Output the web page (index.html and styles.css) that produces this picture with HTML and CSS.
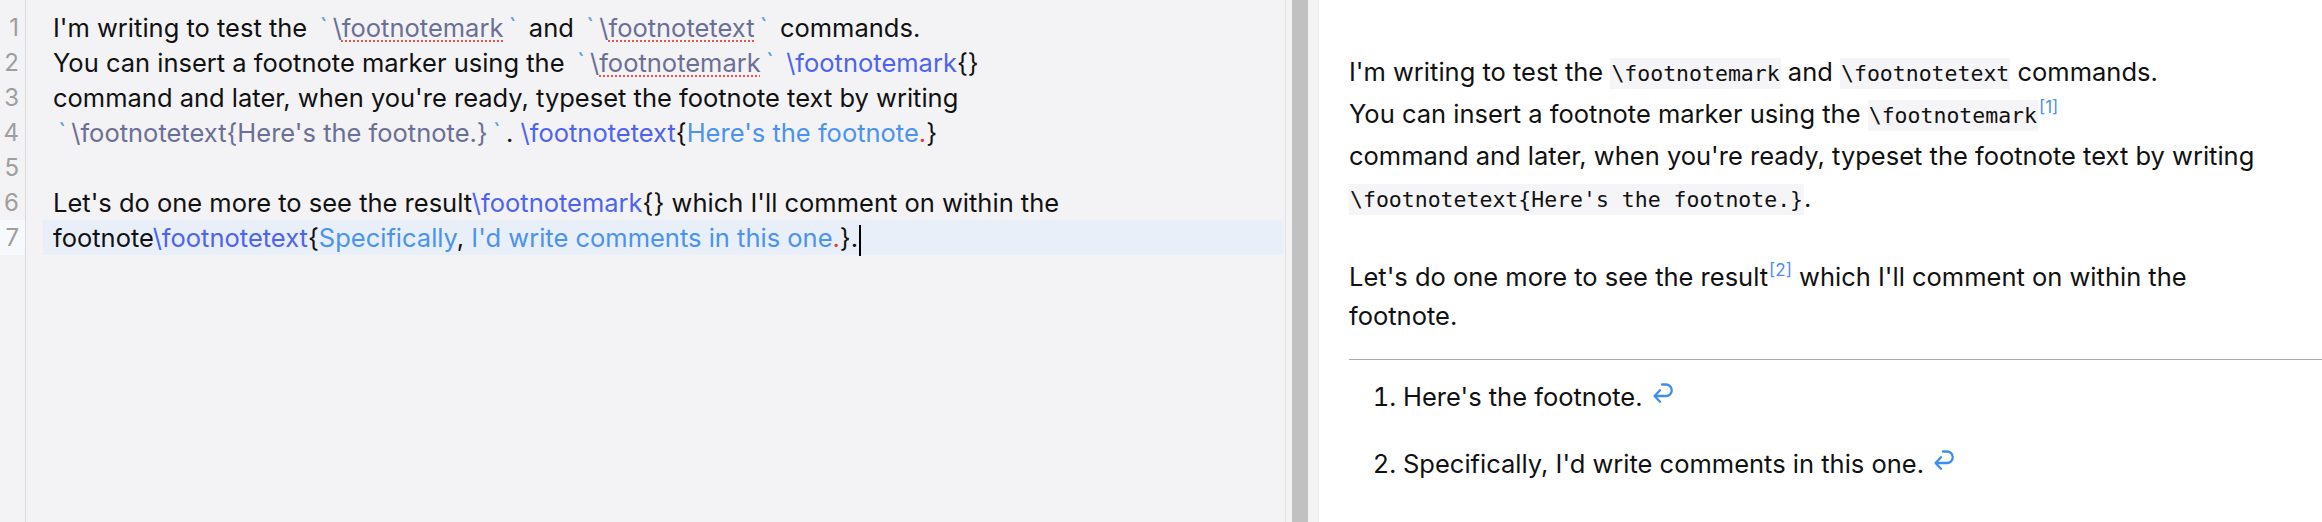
FILE: index.html
```html
<!DOCTYPE html>
<html>
<head>
<meta charset="utf-8">
<title>Footnotes</title>
<link rel="stylesheet" href="styles.css">
</head>
<body>
<div class="app">
  <section class="editor">
    <div class="gutter">
      <div class="ln">1</div>
      <div class="ln">2</div>
      <div class="ln">3</div>
      <div class="ln">4</div>
      <div class="ln">5</div>
      <div class="ln">6</div>
      <div class="ln active">7</div>
    </div>
    <div class="code">
      <div class="line">I'm writing to test the <span class="bt">`</span><span class="ic">\<span class="sp">footnotemark</span></span><span class="bt">`</span> and <span class="bt">`</span><span class="ic">\<span class="sp">footnotetext</span></span><span class="bt">`</span> commands.</div>
      <div class="line">You can insert a footnote marker using the <span class="bt">`</span><span class="ic">\<span class="sp">footnotemark</span></span><span class="bt">`</span> <span class="cmd">\footnotemark</span>{}</div>
      <div class="line">command and later, when you're ready, typeset the footnote text by writing</div>
      <div class="line"><span class="bt">`</span><span class="ic">\footnotetext{Here's the footnote.}</span><span class="bt">`</span>. <span class="cmd">\footnotetext</span>{<span class="arg">Here's the footnote</span><span class="dot">.</span>}</div>
      <div class="line"></div>
      <div class="line">Let's do one more to see the result<span class="cmd">\footnotemark</span>{} which I'll comment on within the</div>
      <div class="line active">footnote<span class="cmd">\footnotetext</span>{<span class="arg">Specifically</span>, <span class="arg">I'd write comments in this one</span><span class="dot">.</span>}.<span class="caret"></span></div>
    </div>
  </section>
  <div class="splitter"><div class="grip"></div></div>
  <section class="preview">
    <p class="p1">I'm writing to test the <code>\footnotemark</code> and <code>\footnotetext</code> commands.<br>You can insert a footnote marker using the <code>\footnotemark</code><sup>[1]</sup><br>command and later, when you're ready, typeset the footnote text by writing<br><code>\footnotetext{Here's the footnote.}</code>.</p>
    <p class="p2">Let's do one more to see the result<sup>[2]</sup> which I'll comment on within the<br>footnote.</p>
    <hr>
    <ol class="notes">
      <li>Here's the footnote. <svg class="back" viewBox="0 0 22 22" width="22" height="22"><path d="M10 2.5 H14 A5.75 5.75 0 0 1 14 14 H3" fill="none" stroke="currentColor" stroke-width="2.3" stroke-linecap="round"/><path d="M8 8.3 L2.6 14 L8 19.7" fill="none" stroke="currentColor" stroke-width="2.3" stroke-linecap="round" stroke-linejoin="round"/></svg></li>
      <li>Specifically, I'd write comments in this one. <svg class="back" viewBox="0 0 22 22" width="22" height="22"><path d="M10 2.5 H14 A5.75 5.75 0 0 1 14 14 H3" fill="none" stroke="currentColor" stroke-width="2.3" stroke-linecap="round"/><path d="M8 8.3 L2.6 14 L8 19.7" fill="none" stroke="currentColor" stroke-width="2.3" stroke-linecap="round" stroke-linejoin="round"/></svg></li>
    </ol>
  </section>
</div>
</body>
</html>
```
FILE: styles.css
```css
html, body {
  margin: 0;
  padding: 0;
  background: #fff;
}
body {
  font-family: Inter, "Noto Sans", sans-serif;
  font-size: 25.5px;
  color: #111;
}
.app {
  display: flex;
  height: 522px;
  overflow: hidden;
}

/* ---------- editor ---------- */
.editor {
  width: 1285px;
  flex: none;
  display: flex;
  align-items: stretch;
  background: #f3f3f6;
  padding-top: 10px;
  box-sizing: border-box;
}
.gutter {
  width: 25px;
  flex: none;
  border-right: 1px solid #dadadd;
  margin-top: -10px;
  padding-top: 10px;
}
.ln {
  height: 35px;
  line-height: 35px;
  text-align: right;
  padding-right: 6px;
  color: #9e9e9e;
  font-size: 24px;
}
.ln.active {
  background: #f7f9fc;
}
.code {
  flex: 1;
  margin-left: 17px;
  margin-right: 2px;
}
.line {
  height: 35px;
  line-height: 35px;
  padding-left: 10px;
  white-space: pre;
}
.line.active {
  background: #e9eff8;
}
.bt {
  color: #5a9fe8;
  margin: 0 5px;
}
.ic {
  color: #6b6f95;
}
.sp {
  text-decoration: underline dotted #e8534f;
  text-decoration-thickness: 2px;
  text-underline-offset: 3px;
}
.cmd {
  color: #4e63f0;
}
.arg {
  color: #4a93ee;
}
.dot {
  color: #e5392f;
}
.caret {
  display: inline-block;
  width: 2px;
  height: 31px;
  background: #000;
  vertical-align: middle;
  margin-left: 1px;
}

/* ---------- splitter ---------- */
.splitter {
  width: 26px;
  flex: none;
  display: flex;
  background: #f3f3f3;
  border-left: 1px solid #e2e2e2;
  border-right: 1px solid #ececec;
  padding-left: 6px;
  box-sizing: content-box;
}
.grip {
  width: 16px;
  background: #c1c1c1;
}

/* ---------- preview ---------- */
.preview {
  flex: 1;
  background: #fff;
  padding: 51px 0 0 30px;
  color: #111;
}
.preview p {
  margin: 0;
}
.p1 {
  line-height: 42px;
}
.preview .p2 {
  line-height: 39px;
  margin-top: 38px;
}
code {
  font-family: "DejaVu Sans Mono", "Liberation Mono", monospace;
  font-size: 21.5px;
  line-height: 1;
  background: #f5f5f7;
  padding: 3px 1px;
  color: #111;
}
sup {
  font-size: 17px;
  line-height: 0;
  color: #4a90e8;
  vertical-align: 10px;
  margin-left: 1px;
}
hr {
  margin: 24px 0 0;
  border: 0;
  border-top: 1px solid #a9a9a9;
  height: 0;
}
.notes {
  margin: 17px 0 0;
  padding-left: 54px;
  line-height: 40px;
}
.notes li + li {
  margin-top: 27px;
}
.back {
  color: #3d8cf0;
  vertical-align: 2px;
  margin-left: 2px;
}
```
